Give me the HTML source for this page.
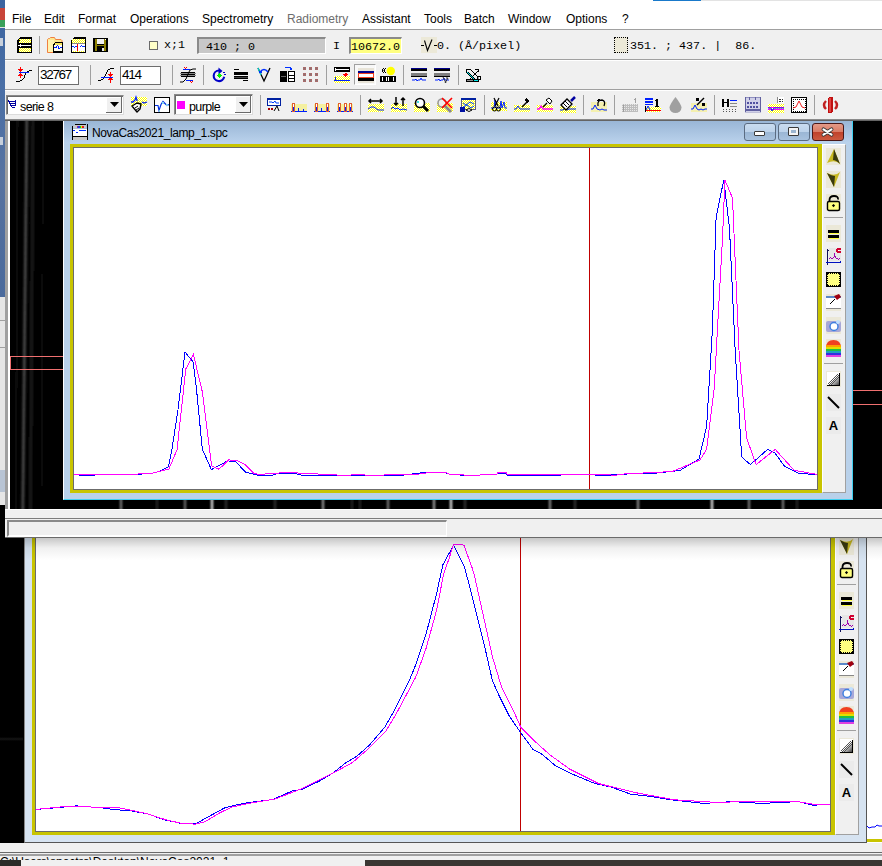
<!DOCTYPE html><html><head><meta charset="utf-8"><style>
*{margin:0;padding:0;box-sizing:border-box}
html,body{width:882px;height:866px;overflow:hidden;background:#000;position:relative;font-family:"Liberation Sans",sans-serif;font-size:12px;color:#000}
.a{position:absolute}
.mono{font-family:"Liberation Mono",monospace}
.menu span{position:absolute;top:12px;font-size:12px;line-height:14px;color:#000}
.vs{position:absolute;width:1px;background:#a0a0a0}
svg.i{position:absolute;overflow:visible}
.tb{border:1px solid #5b6c82;border-radius:3px;background:linear-gradient(#c9dcf0 0,#bcd2ea 50%,#9ab6d4 50%,#a8c2de 100%)}
.tb.cl{border-color:#4a1818;background:linear-gradient(#e39a88 0,#d97a64 50%,#c0412a 50%,#cc5a40 100%)}
.tb i.m{position:absolute;left:9px;top:7px;width:11px;height:5px;background:#fff;border:1px solid #3a3a3a;border-radius:1px}
.tb i.x{position:absolute;left:9px;top:3px;width:11px;height:9px;background:#9bb5d0;border:1px solid #3a3a3a;box-shadow:inset 0 0 0 2px #f4f4f4;border-radius:1px}
.inp{position:absolute;background:#fff;border:1px solid #6e6e6e;font-size:13.5px;line-height:15px;letter-spacing:-1.3px}
.sunk{position:absolute;border-top:2px solid #8a8a8a;border-left:2px solid #8a8a8a;border-bottom:1px solid #fff;border-right:1px solid #fff}
</style></head><body>
<svg width="0" height="0" style="position:absolute"><defs><pattern id="dy" width="2" height="2" patternUnits="userSpaceOnUse"><rect width="2" height="2" fill="#fff"/><rect width="1" height="1" fill="#ff0"/><rect x="1" y="1" width="1" height="1" fill="#ff0"/></pattern></defs></svg>
<div class="a" style="left:0;top:0;width:5px;height:540px;background:#000"></div>
<div class="a" style="left:0;top:0;width:5px;height:297px;background:linear-gradient(#3b64a0,#4a6fa6 30%,#5873a0 60%,#4a6a9c)"></div>
<div class="a" style="left:0;top:8px;width:5px;height:12px;background:#c8453a"></div>
<div class="a" style="left:0;top:20px;width:5px;height:7px;background:#3aa05a"></div>
<div class="a" style="left:0;top:27px;width:5px;height:1px;background:#e0e0e0"></div>
<div class="a" style="left:0;top:38px;width:3px;height:8px;background:#c8d0dc"></div>
<div class="a" style="left:0;top:137px;width:3px;height:8px;background:#c8d0dc"></div>
<div class="a" style="left:0;top:297px;width:5px;height:173px;background:#e6e6e6"></div>
<div class="a" style="left:0;top:320px;width:5px;height:1px;background:#a0a0a0"></div>
<div class="a" style="left:0;top:347px;width:5px;height:1px;background:#a0a0a0"></div>
<div class="a" style="left:0;top:470px;width:5px;height:22px;background:#b8c4d4"></div>
<div class="a" style="left:0;top:492px;width:5px;height:13px;background:#e6e6e6"></div>
<div class="a menu" style="left:5px;top:0;width:877px;height:29px;background:#fff">
 <span style="left:7px">File</span>
 <span style="left:39px">Edit</span>
 <span style="left:73px">Format</span>
 <span style="left:125px">Operations</span>
 <span style="left:197px">Spectrometry</span>
 <span style="left:282px;color:#6d6d6d">Radiometry</span>
 <span style="left:357px">Assistant</span>
 <span style="left:419px">Tools</span>
 <span style="left:459px">Batch</span>
 <span style="left:503px">Window</span>
 <span style="left:561px">Options</span>
 <span style="left:617px">?</span>
</div>
<div class="a" style="left:653px;top:0;width:48px;height:1px;background:#1979ca"></div>
<div class="a" style="left:701px;top:0;width:181px;height:1px;background:#e3e3e3"></div>
<div class="a" style="left:5px;top:29px;width:877px;height:92px;background:#f0f0f0"></div>
<div class="a" style="left:5px;top:29px;width:877px;height:1px;background:#a0a0a0"></div>
<div class="a" style="left:5px;top:59px;width:877px;height:1px;background:#a0a0a0"></div>
<div class="a" style="left:5px;top:60px;width:877px;height:1px;background:#fff"></div>
<div class="a" style="left:5px;top:89px;width:877px;height:1px;background:#a0a0a0"></div>
<div class="a" style="left:5px;top:90px;width:877px;height:1px;background:#fff"></div>
<div class="a" style="left:5px;top:119px;width:877px;height:1px;background:#8a8a8a"></div>
<div class="a" style="left:5px;top:120px;width:877px;height:1px;background:#646464"></div>
<svg class="i" style="left:17px;top:37px" width="16" height="16" viewBox="0 0 16 16" shape-rendering="crispEdges"><path d="M3 0h12v16H0V3z" fill="#000"/><rect x="2" y="2" width="12" height="4" fill="url(#dy)"/><rect x="2" y="3" width="1" height="1" fill="#000"/><rect x="1" y="8" width="13" height="1" fill="#fff"/><rect x="3" y="7" width="1" height="3" fill="#fff"/><rect x="2" y="11" width="12" height="4" fill="url(#dy)"/></svg>
<div class="vs" style="left:39px;top:36px;height:18px"></div>
<svg class="i" style="left:47px;top:37px" width="16" height="16" viewBox="0 0 16 16" shape-rendering="crispEdges"><path d="M0.5 15.5V2.5l1-1h1l1-1h4l1 2h5.5l1 1v12z" fill="#fde890" stroke="#f08040" shape-rendering="auto"/><rect x="1" y="3" width="6" height="12" fill="#fff4b0"/><path d="M8 5h8v11H6V7z" fill="#000"/><rect x="8" y="6" width="7" height="2" fill="#f8e860"/><rect x="7" y="8" width="8" height="6" fill="#fffff0"/><rect x="7" y="10" width="2" height="1" fill="#0020ff"/><rect x="9" y="9" width="1" height="2" fill="#0020ff"/><rect x="10" y="8" width="1" height="1" fill="#0020ff"/><rect x="11" y="9" width="1" height="3" fill="#0020ff"/><rect x="12" y="11" width="1" height="1" fill="#0020ff"/><rect x="13" y="10" width="2" height="1" fill="#0020ff"/></svg>
<svg class="i" style="left:71px;top:37px" width="16" height="16" viewBox="0 0 16 16" shape-rendering="crispEdges"><path d="M3 0h12v16H0V3z" fill="#000"/><rect x="1" y="2" width="13" height="4" fill="url(#dy)"/><rect x="1" y="6" width="13" height="1" fill="#888"/><rect x="1" y="7" width="13" height="7" fill="#fff"/><rect x="1" y="9" width="2" height="1" fill="#0030ff"/><rect x="3" y="10" width="1" height="1" fill="#0030ff"/><rect x="4" y="9" width="3" height="1" fill="#0030ff"/><rect x="9" y="9" width="1" height="1" fill="#0030ff"/><rect x="10" y="8" width="1" height="1" fill="#0030ff"/><rect x="11" y="9" width="1" height="1" fill="#0030ff"/><rect x="12" y="9" width="2" height="1" fill="#0030ff"/><rect x="6" y="7" width="1" height="7" fill="#ff0000"/><rect x="1" y="14" width="13" height="1" fill="url(#dy)"/></svg>
<svg class="i" style="left:93px;top:37px" width="16" height="16" viewBox="0 0 16 16" shape-rendering="crispEdges"><rect x="0" y="1" width="15" height="14" fill="#000"/><rect x="2" y="2" width="2" height="12" fill="#8c8000"/><rect x="11" y="2" width="2" height="12" fill="#8c8000"/><rect x="4" y="2" width="7" height="5" fill="#f0f0f0"/><rect x="4" y="7" width="7" height="1" fill="#000"/><rect x="4" y="8" width="7" height="1" fill="#8c8000"/><rect x="12" y="2" width="1" height="1" fill="#fff"/><rect x="9" y="11" width="2" height="3" fill="#e8e8e8"/></svg>
<div class="a" style="left:149px;top:41px;width:9px;height:9px;background:#ffffc8;border:1px solid #6a6a6a"></div>
<div class="a mono" style="left:164px;top:39px;font-size:11.7px;line-height:13px;color:#000">x;1</div>
<div class="sunk" style="left:197px;top:37px;width:129px;height:17px;background:#c8c8c8"></div>
<div class="a mono" style="left:206px;top:41px;font-size:11.7px;line-height:13px">410 ; 0</div>
<div class="a mono" style="left:333px;top:40px;font-size:11.7px;line-height:13px">I</div>
<div class="sunk" style="left:349px;top:37px;width:53px;height:17px;background:#ffff80"></div>
<div class="a mono" style="left:351px;top:41px;font-size:11.7px;line-height:13px">10672.0</div>
<svg class="i" style="left:421px;top:37px" width="16" height="16" viewBox="0 0 16 16" shape-rendering="crispEdges"><rect x="0" y="0" width="16" height="16" fill="#ece9d8"/><rect x="0" y="8" width="3" height="1" fill="#000"/><rect x="13" y="8" width="3" height="1" fill="#000"/><path d="M3.5 3.5l3 10 4.5-11" fill="none" stroke="#000" stroke-width="1.1" shape-rendering="auto"/></svg>
<div class="a mono" style="left:437px;top:40px;font-size:11.7px;line-height:13px">0. (&#197;/pixel)</div>
<div class="a" style="left:614px;top:37px;width:14px;height:16px;background:#ece9d8;border:1px dotted #000"></div>
<div class="a mono" style="left:630px;top:40px;font-size:11.7px;line-height:13px;white-space:pre">351. ; 437. |  86.</div>
<svg class="i" style="left:16px;top:67px" width="16" height="16" viewBox="0 0 16 16" shape-rendering="crispEdges"><rect x="0" y="14" width="4" height="1" fill="#000"/><rect x="4" y="13" width="2" height="1" fill="#000"/><rect x="6" y="12" width="1" height="1" fill="#000"/><rect x="7" y="11" width="1" height="1" fill="#000"/><rect x="8" y="8" width="1" height="3" fill="#000"/><rect x="9" y="6" width="1" height="2" fill="#000"/><rect x="10" y="5" width="1" height="1" fill="#000"/><rect x="11" y="4" width="2" height="1" fill="#000"/><rect x="13" y="3" width="3" height="1" fill="#000"/><rect x="3" y="5" width="10" height="1" fill="#0020ff"/><rect x="4" y="0" width="1" height="5" fill="#ff0000"/><rect x="2" y="2" width="5" height="1" fill="#ff0000"/><rect x="3" y="3" width="3" height="1" fill="#ff0000"/><rect x="4" y="6" width="1" height="5" fill="#ff0000"/><rect x="3" y="7" width="3" height="1" fill="#ff0000"/><rect x="2" y="8" width="5" height="1" fill="#ff0000"/></svg>
<div class="inp" style="left:38px;top:66px;width:41px;height:19px;padding:0 0 0 1px">32767</div>
<div class="vs" style="left:90px;top:65px;height:20px"></div>
<svg class="i" style="left:98px;top:67px" width="16" height="16" viewBox="0 0 16 16" shape-rendering="crispEdges"><rect x="0" y="13" width="3" height="1" fill="#000"/><rect x="3" y="12" width="2" height="1" fill="#000"/><rect x="5" y="11" width="1" height="1" fill="#000"/><rect x="6" y="9" width="1" height="2" fill="#000"/><rect x="7" y="7" width="1" height="2" fill="#000"/><rect x="8" y="5" width="1" height="2" fill="#000"/><rect x="9" y="3" width="1" height="2" fill="#000"/><rect x="10" y="2" width="2" height="1" fill="#000"/><rect x="12" y="1" width="4" height="1" fill="#000"/><rect x="3" y="10" width="12" height="1" fill="#0020ff"/><rect x="12" y="5" width="1" height="5" fill="#ff0000"/><rect x="10" y="7" width="5" height="1" fill="#ff0000"/><rect x="11" y="8" width="3" height="1" fill="#ff0000"/><rect x="12" y="11" width="1" height="5" fill="#ff0000"/><rect x="11" y="11" width="3" height="1" fill="#ff0000"/><rect x="10" y="12" width="5" height="1" fill="#ff0000"/></svg>
<div class="inp" style="left:120px;top:66px;width:41px;height:19px;padding:0 0 0 1px">414</div>
<div class="vs" style="left:172px;top:65px;height:20px"></div>
<svg class="i" style="left:180px;top:67px" width="16" height="16" viewBox="0 0 16 16" shape-rendering="crispEdges"><rect x="1" y="5" width="14" height="1" fill="#000"/><rect x="0" y="6" width="16" height="1" fill="#888"/><rect x="1" y="7" width="14" height="1" fill="#000"/><rect x="1" y="9" width="14" height="1" fill="#000"/><rect x="0" y="8" width="16" height="1" fill="#888"/><rect x="3" y="2" width="7" height="1" fill="#0020ff"/><rect x="6" y="13" width="7" height="1" fill="#0020ff"/><path d="M0 15h3l3-3 2-5 2-4 3-1h3" fill="none" stroke="#000" shape-rendering="auto"/><rect x="4" y="0" width="1" height="1" fill="#f00"/><rect x="6" y="0" width="1" height="1" fill="#f00"/><rect x="5" y="1" width="1" height="1" fill="#f00"/><rect x="10" y="14" width="1" height="1" fill="#f00"/><rect x="12" y="14" width="1" height="1" fill="#f00"/><rect x="11" y="15" width="1" height="1" fill="#f00"/></svg>
<div class="vs" style="left:203px;top:65px;height:20px"></div>
<svg class="i" style="left:211px;top:67px" width="16" height="16" viewBox="0 0 16 16" shape-rendering="crispEdges"><path d="M8 3.5A5.3 5.3 0 1 0 13.2 9.8" fill="none" stroke="#0000c8" stroke-width="2.1" shape-rendering="auto"/><path d="M7.5 0.5L11.5 4 7.5 7.5z" fill="#0000c8" shape-rendering="auto"/><rect x="12" y="5" width="2" height="1" fill="#0000c8"/><rect x="13" y="7" width="2" height="1" fill="#0000c8"/><rect x="7" y="7" width="3" height="3" fill="#00f000"/><rect x="8" y="6" width="1" height="5" fill="#00f000"/><rect x="6" y="8" width="5" height="1" fill="#00f000"/></svg>
<svg class="i" style="left:234px;top:67px" width="16" height="16" viewBox="0 0 16 16" shape-rendering="crispEdges"><rect x="0" y="2" width="5" height="1" fill="#000"/><rect x="0" y="5" width="14" height="3" fill="#000"/><rect x="0" y="9" width="14" height="3" fill="#000"/><rect x="0" y="10" width="14" height="1" fill="#444"/><rect x="9" y="13" width="5" height="1" fill="#000"/></svg>
<svg class="i" style="left:257px;top:67px" width="16" height="16" viewBox="0 0 16 16" shape-rendering="crispEdges"><path d="M1 1l6 13 6-13" fill="none" stroke="#000" stroke-width="1.3" shape-rendering="auto"/><path d="M1 1l3 7" stroke="#00d0d0" stroke-width="1.3" shape-rendering="auto"/><path d="M3 5q4-5 8 0" fill="none" stroke="#0030ff" stroke-width="1.5" shape-rendering="auto"/><rect x="2" y="4" width="3" height="2" fill="#0030ff"/></svg>
<svg class="i" style="left:280px;top:67px" width="16" height="16" viewBox="0 0 16 16" shape-rendering="crispEdges"><rect x="5" y="0" width="6" height="1" fill="#0030ff"/><rect x="10" y="1" width="2" height="2" fill="#0030ff"/><rect x="0" y="4" width="7" height="11" fill="#000"/><rect x="1" y="9" width="5" height="1" fill="#666"/><rect x="8" y="4" width="7" height="11" fill="#000"/><rect x="9" y="5" width="5" height="3" fill="#fff"/><rect x="9" y="9" width="5" height="2" fill="#fff"/><rect x="9" y="12" width="5" height="2" fill="#fff"/></svg>
<svg class="i" style="left:303px;top:67px" width="16" height="16" viewBox="0 0 16 16" shape-rendering="crispEdges"><rect x="0" y="0" width="3" height="3" fill="#a86a6a"/><rect x="1" y="1" width="1" height="1" fill="#7a7a7a"/><rect x="0" y="6" width="3" height="3" fill="#a86a6a"/><rect x="1" y="7" width="1" height="1" fill="#7a7a7a"/><rect x="0" y="12" width="3" height="3" fill="#a86a6a"/><rect x="1" y="13" width="1" height="1" fill="#7a7a7a"/><rect x="6" y="0" width="3" height="3" fill="#a86a6a"/><rect x="7" y="1" width="1" height="1" fill="#7a7a7a"/><rect x="6" y="6" width="3" height="3" fill="#a86a6a"/><rect x="7" y="7" width="1" height="1" fill="#7a7a7a"/><rect x="6" y="12" width="3" height="3" fill="#a86a6a"/><rect x="7" y="13" width="1" height="1" fill="#7a7a7a"/><rect x="12" y="0" width="3" height="3" fill="#a86a6a"/><rect x="13" y="1" width="1" height="1" fill="#7a7a7a"/><rect x="12" y="6" width="3" height="3" fill="#a86a6a"/><rect x="13" y="7" width="1" height="1" fill="#7a7a7a"/><rect x="12" y="12" width="3" height="3" fill="#a86a6a"/><rect x="13" y="13" width="1" height="1" fill="#7a7a7a"/></svg>
<div class="vs" style="left:326px;top:65px;height:20px"></div>
<svg class="i" style="left:334px;top:67px" width="16" height="16" viewBox="0 0 16 16" shape-rendering="crispEdges"><rect x="0" y="0" width="16" height="5" fill="#000"/><rect x="1" y="2" width="14" height="1" fill="#fff"/><rect x="1" y="1" width="1" height="3" fill="#fff"/><rect x="0" y="9" width="16" height="7" fill="url(#dy)"/><rect x="0" y="13" width="16" height="1" fill="#0020ff"/><rect x="1" y="10" width="1" height="4" fill="#0020ff"/><path d="M9 7h5l-2.5 3z" fill="#f00"/><rect x="11" y="6" width="2" height="2" fill="#f00"/></svg>
<div class="a" style="left:354px;top:64px;width:22px;height:21px;background:#f8f8f8;border-left:1px solid #a0a0a0;border-top:1px solid #a0a0a0;border-right:1px solid #fff;border-bottom:1px solid #fff"></div>
<svg class="i" style="left:358px;top:67px" width="16" height="16" viewBox="0 0 16 16" shape-rendering="crispEdges"><rect x="0" y="1" width="16" height="3" fill="#e8e4d8"/><rect x="0" y="4" width="16" height="2" fill="#00008a"/><rect x="0" y="6" width="16" height="5" fill="#f04020"/><rect x="1" y="7" width="14" height="3" fill="#fff"/><rect x="0" y="11" width="16" height="3" fill="#000"/><rect x="0" y="14" width="16" height="2" fill="#e8e4d8"/></svg>
<svg class="i" style="left:380px;top:67px" width="17" height="16" viewBox="0 0 17 16" shape-rendering="crispEdges"><rect x="2" y="2" width="1" height="3" fill="#000"/><rect x="3" y="1" width="1" height="1" fill="#000"/><rect x="3" y="5" width="1" height="1" fill="#000"/><rect x="3" y="3" width="1" height="1" fill="#888"/><rect x="4" y="2" width="1" height="3" fill="#000"/><rect x="5" y="1" width="1" height="1" fill="#000"/><rect x="5" y="5" width="1" height="1" fill="#000"/><circle cx="10.8" cy="4" r="4.2" fill="#ffff00" shape-rendering="auto"/><rect x="0" y="9" width="16" height="6" fill="#000"/><rect x="2" y="10" width="1" height="4" fill="#fff"/><rect x="6" y="10" width="1" height="4" fill="#fff"/><rect x="8" y="10" width="1" height="4" fill="#fff"/><rect x="13" y="10" width="1" height="4" fill="#fff"/></svg>
<div class="vs" style="left:403px;top:65px;height:20px"></div>
<svg class="i" style="left:411px;top:67px" width="16" height="16" viewBox="0 0 16 16" shape-rendering="crispEdges"><rect x="0" y="1" width="16" height="3" fill="#000"/><rect x="0" y="1" width="16" height="1" fill="#00008a"/><rect x="0" y="6" width="16" height="3" fill="#808080"/><rect x="0" y="9" width="16" height="1" fill="#000"/><path d="M1 13h3l1-1 1 2 1-1h2l1-2 1 2h4" fill="none" stroke="#0020ff" shape-rendering="auto"/></svg>
<svg class="i" style="left:434px;top:67px" width="16" height="16" viewBox="0 0 16 16" shape-rendering="crispEdges"><rect x="0" y="1" width="16" height="3" fill="#000"/><rect x="0" y="1" width="16" height="1" fill="#00008a"/><rect x="0" y="6" width="16" height="3" fill="#808080"/><rect x="0" y="9" width="16" height="1" fill="#000"/><path d="M1 13h3l1-1 1 2 1-1h2l1-2 1 2h4" fill="none" stroke="#0020ff" shape-rendering="auto"/><path d="M9 10l3 6M12 11h2l-3 5" fill="none" stroke="#333" shape-rendering="auto"/></svg>
<div class="vs" style="left:458px;top:65px;height:20px"></div>
<svg class="i" style="left:465px;top:67px" width="16" height="16" viewBox="0 0 16 16" shape-rendering="crispEdges"><rect x="1" y="2" width="4" height="1" fill="#000"/><rect x="1" y="3" width="1" height="2" fill="#000"/><rect x="10" y="2" width="4" height="1" fill="#000"/><rect x="13" y="3" width="1" height="2" fill="#000"/><rect x="5" y="2" width="1" height="1" fill="#000"/><rect x="6" y="3" width="1" height="1" fill="#000"/><rect x="7" y="4" width="1" height="1" fill="#000"/><rect x="8" y="5" width="1" height="1" fill="#000"/><rect x="9" y="6" width="1" height="1" fill="#000"/><rect x="10" y="7" width="1" height="1" fill="#000"/><rect x="11" y="8" width="1" height="1" fill="#000"/><rect x="12" y="9" width="1" height="1" fill="#000"/><rect x="12" y="4" width="1" height="1" fill="#000"/><rect x="11" y="5" width="1" height="1" fill="#000"/><rect x="10" y="6" width="1" height="1" fill="#000"/><rect x="9" y="7" width="1" height="1" fill="#000"/><rect x="8" y="8" width="1" height="1" fill="#000"/><rect x="7" y="9" width="1" height="1" fill="#000"/><rect x="6" y="10" width="1" height="1" fill="#000"/><rect x="5" y="11" width="1" height="1" fill="#000"/><rect x="4" y="12" width="1" height="1" fill="#000"/><rect x="1" y="5" width="1" height="1" fill="#000"/><rect x="2" y="5" width="1" height="1" fill="#00e8e8"/><rect x="3" y="5" width="1" height="1" fill="#000"/><rect x="2" y="6" width="1" height="1" fill="#000"/><rect x="3" y="6" width="1" height="1" fill="#00e8e8"/><rect x="4" y="6" width="1" height="1" fill="#000"/><rect x="3" y="7" width="1" height="1" fill="#000"/><rect x="4" y="7" width="1" height="1" fill="#00e8e8"/><rect x="5" y="7" width="1" height="1" fill="#000"/><rect x="4" y="8" width="1" height="1" fill="#000"/><rect x="5" y="8" width="1" height="1" fill="#00e8e8"/><rect x="6" y="8" width="1" height="1" fill="#000"/><rect x="5" y="9" width="1" height="1" fill="#000"/><rect x="6" y="9" width="1" height="1" fill="#00e8e8"/><rect x="7" y="9" width="1" height="1" fill="#000"/><rect x="6" y="10" width="1" height="1" fill="#000"/><rect x="7" y="10" width="1" height="1" fill="#00e8e8"/><rect x="8" y="10" width="1" height="1" fill="#000"/><rect x="7" y="11" width="1" height="1" fill="#000"/><rect x="8" y="11" width="1" height="1" fill="#00e8e8"/><rect x="9" y="11" width="1" height="1" fill="#000"/><rect x="1" y="12" width="13" height="3" fill="#000"/><rect x="2" y="13" width="6" height="1" fill="#909090"/><rect x="9" y="13" width="4" height="1" fill="#00e8e8"/><rect x="12" y="9" width="4" height="4" fill="#000"/><rect x="13" y="10" width="1" height="2" fill="#a0a0a0"/><rect x="14" y="10" width="1" height="2" fill="#fff"/></svg>
<div class="a" style="left:6px;top:95px;width:118px;height:20px;background:#fff;border:1px solid #8a8a8a;border-right-color:#dcdcdc;border-bottom-color:#dcdcdc;box-shadow:inset 1px 1px 0 #6a6a6a"></div>
<div class="a" style="left:106px;top:97px;width:16px;height:16px;background:#f0f0f0;border-right:1px solid #6a6a6a;border-bottom:1px solid #6a6a6a;box-shadow:inset 1px 1px 0 #fff"></div>
<svg class="i" style="left:110px;top:102px" width="9" height="5"><path d="M0 0h9L4.5 5z" fill="#000"/></svg>
<svg class="i" style="left:8px;top:100px" width="9" height="9" viewBox="0 0 9 9" shape-rendering="crispEdges"><rect x="0" y="0" width="1" height="1" fill="#0000a0"/><rect x="0" y="1" width="8" height="1" fill="#0000a0"/><rect x="1" y="2" width="1" height="1" fill="#0000a0"/><rect x="1" y="3" width="7" height="1" fill="#0000a0"/><rect x="2" y="4" width="1" height="1" fill="#0000a0"/><rect x="2" y="5" width="6" height="1" fill="#0000a0"/><rect x="3" y="6" width="1" height="1" fill="#0000a0"/><rect x="4" y="7" width="3" height="1" fill="#0000a0"/><rect x="7" y="0" width="1" height="2" fill="#0000a0"/><rect x="7" y="2" width="1" height="2" fill="#0000a0"/><rect x="7" y="4" width="1" height="2" fill="#0000a0"/></svg>
<div class="a" style="left:20px;top:100px;font-size:12.5px;line-height:14px;letter-spacing:-0.6px">serie 8</div>
<svg class="i" style="left:131px;top:97px" width="16" height="16" viewBox="0 0 16 16" shape-rendering="crispEdges"><rect x="0" y="0" width="16" height="9" fill="url(#dy)"/><path d="M0 5h2l2-2 1-3 1 3 0 1M11 5l2 1 3-1" fill="none" stroke="#0020ff" stroke-width="1.3" shape-rendering="auto"/><path d="M1 9l5-3 4 1-1 5-3 3z" fill="#fff" stroke="#000" stroke-width="1.4" stroke-linejoin="round" shape-rendering="auto"/><path d="M4 11l3-2M5 13l3-2" stroke="#000" stroke-width="1" shape-rendering="auto"/></svg>
<svg class="i" style="left:154px;top:97px" width="16" height="16" viewBox="0 0 16 16" shape-rendering="crispEdges"><rect x="0" y="0" width="16" height="16" fill="#000"/><rect x="1" y="1" width="14" height="14" fill="#fff"/><path d="M1 8.5h3l1 5 2-6 2-3 2 2 2 2 2-1" fill="none" stroke="#0030e0" stroke-width="1.2" shape-rendering="auto"/><rect x="8" y="5" width="2" height="2" fill="#80d0f0"/><rect x="12" y="7" width="2" height="2" fill="#80d0f0"/><rect x="5" y="13" width="1" height="2" fill="#80d0f0"/></svg>
<div class="a" style="left:174px;top:94px;width:79px;height:21px;background:#fff;border:1px solid #8a8a8a;border-right-color:#dcdcdc;border-bottom-color:#dcdcdc;box-shadow:inset 1px 1px 0 #6a6a6a"></div>
<div class="a" style="left:177px;top:101px;width:8px;height:8px;background:#ff00ff"></div>
<div class="a" style="left:189px;top:100px;font-size:12.5px;line-height:14px;letter-spacing:-0.6px">purple</div>
<div class="a" style="left:235px;top:96px;width:16px;height:17px;background:#f0f0f0;border-right:1px solid #6a6a6a;border-bottom:1px solid #6a6a6a;box-shadow:inset 1px 1px 0 #fff"></div>
<svg class="i" style="left:239px;top:102px" width="9" height="5"><path d="M0 0h9L4.5 5z" fill="#000"/></svg>
<div class="vs" style="left:260px;top:95px;height:20px"></div>
<svg class="i" style="left:267px;top:98px" width="14" height="14" viewBox="0 0 14 14" shape-rendering="crispEdges"><rect x="0" y="0" width="14" height="8" fill="#0020a0"/><rect x="1" y="1" width="12" height="6" fill="#fff"/><rect x="1" y="1" width="12" height="1" fill="#0020a0"/><path d="M2 4h3l1 1 2-2 1 2h3" fill="none" stroke="#0040ff" shape-rendering="auto"/><rect x="1" y="10" width="2" height="2" fill="#a00"/><rect x="4" y="10" width="2" height="2" fill="#a00"/><path d="M7 13l3-5 2 5" fill="none" stroke="#000" shape-rendering="auto"/></svg>
<svg class="i" style="left:291px;top:99px" width="16" height="16" viewBox="0 0 16 16" shape-rendering="crispEdges"><rect x="0" y="5" width="16" height="7" fill="#f4f0a0"/><rect x="0" y="12" width="16" height="1" fill="#0020ff"/><rect x="1" y="4" width="3" height="9" fill="#e06030"/><rect x="2" y="5" width="1" height="7" fill="#fff"/><rect x="2" y="8" width="1" height="4" fill="#0020ff"/><rect x="7" y="9" width="1" height="3" fill="#0020ff"/><rect x="12" y="10" width="1" height="2" fill="#0020ff"/></svg>
<svg class="i" style="left:314px;top:99px" width="16" height="16" viewBox="0 0 16 16" shape-rendering="crispEdges"><rect x="0" y="5" width="16" height="7" fill="#f4f0a0"/><rect x="0" y="12" width="16" height="1" fill="#0020ff"/><rect x="1" y="4" width="3" height="9" fill="#e06030"/><rect x="2" y="5" width="1" height="7" fill="#fff"/><rect x="2" y="8" width="1" height="4" fill="#0020ff"/><rect x="12" y="4" width="3" height="9" fill="#e06030"/><rect x="13" y="5" width="1" height="7" fill="#fff"/><rect x="13" y="8" width="1" height="4" fill="#0020ff"/><rect x="7" y="9" width="1" height="3" fill="#0020ff"/></svg>
<svg class="i" style="left:337px;top:99px" width="16" height="16" viewBox="0 0 16 16" shape-rendering="crispEdges"><rect x="0" y="5" width="16" height="7" fill="#f4f0a0"/><rect x="0" y="12" width="16" height="1" fill="#0020ff"/><rect x="1" y="4" width="3" height="9" fill="#e06030"/><rect x="2" y="5" width="1" height="7" fill="#fff"/><rect x="2" y="8" width="1" height="4" fill="#0020ff"/><rect x="7" y="4" width="3" height="9" fill="#e06030"/><rect x="8" y="5" width="1" height="7" fill="#fff"/><rect x="8" y="8" width="1" height="4" fill="#0020ff"/><rect x="12" y="4" width="3" height="9" fill="#e06030"/><rect x="13" y="5" width="1" height="7" fill="#fff"/><rect x="13" y="8" width="1" height="4" fill="#0020ff"/></svg>
<div class="vs" style="left:360px;top:95px;height:20px"></div>
<svg class="i" style="left:368px;top:97px" width="16" height="16" viewBox="0 0 16 16" shape-rendering="crispEdges"><rect x="0" y="7" width="16" height="8" fill="url(#dy)"/><path d="M0 12l3-2h3l4 3h6" fill="none" stroke="#0020ff" shape-rendering="auto"/><path d="M1 4h13M3 2l-2 2 2 2M12 2l2 2-2 2" fill="none" stroke="#000" stroke-width="1.5" shape-rendering="auto"/></svg>
<svg class="i" style="left:391px;top:97px" width="16" height="16" viewBox="0 0 16 16" shape-rendering="crispEdges"><rect x="0" y="7" width="16" height="8" fill="url(#dy)"/><path d="M0 12l2-2 2 2 3-1 2 2 3-1 4 1" fill="none" stroke="#0020ff" shape-rendering="auto"/><path d="M5 0v8M3 6l2 2 2-2M12 9V1M10 3l2-2 2 2" fill="none" stroke="#000" stroke-width="1.5" shape-rendering="auto"/></svg>
<svg class="i" style="left:414px;top:97px" width="16" height="16" viewBox="0 0 16 16" shape-rendering="crispEdges"><rect x="0" y="6" width="16" height="9" fill="url(#dy)"/><circle cx="6" cy="6" r="4.5" fill="#fff" stroke="#000" stroke-width="1.6" shape-rendering="auto"/><path d="M9 9l5 5" stroke="#000" stroke-width="3" shape-rendering="auto"/><rect x="3" y="4" width="2" height="2" fill="#40e0e0"/></svg>
<svg class="i" style="left:437px;top:97px" width="16" height="16" viewBox="0 0 16 16" shape-rendering="crispEdges"><rect x="0" y="6" width="16" height="9" fill="url(#dy)"/><circle cx="5" cy="6" r="4" fill="#eee" stroke="#999" stroke-width="1.6" shape-rendering="auto"/><path d="M8 9l6 6" stroke="#888" stroke-width="3" shape-rendering="auto"/><path d="M5 1l10 10M15 1L5 11" stroke="#f00" stroke-width="1.6" shape-rendering="auto"/></svg>
<svg class="i" style="left:460px;top:97px" width="16" height="16" viewBox="0 0 16 16" shape-rendering="crispEdges"><rect x="1" y="1" width="15" height="12" fill="#606080"/><rect x="2" y="3" width="13" height="9" fill="#fff"/><rect x="2" y="3" width="13" height="9" fill="url(#dy)"/><rect x="1" y="1" width="15" height="2" fill="#0020a0"/><path d="M3 6l3 2 4-3 4 2M3 10l4-2 4 3 3-2" fill="none" stroke="#0040ff" shape-rendering="auto"/><rect x="0" y="10" width="5" height="5" fill="#0010a0"/><path d="M6 13q3-3 6 0q-3 3-6 0z" fill="#fff" stroke="#000" shape-rendering="auto"/></svg>
<div class="vs" style="left:484px;top:95px;height:20px"></div>
<svg class="i" style="left:491px;top:97px" width="16" height="16" viewBox="0 0 16 16" shape-rendering="crispEdges"><rect x="0" y="5" width="16" height="9" fill="url(#dy)"/><path d="M0 11h3l1-8 1 8h4l1-7 1 7 2-6 1 6h2" fill="none" stroke="#0020ff" shape-rendering="auto"/><path d="M3 1l4 8M8 1L4 9" stroke="#000" stroke-width="1.2" shape-rendering="auto"/><circle cx="3.5" cy="12" r="2" fill="none" stroke="#000" shape-rendering="auto"/><circle cx="7.5" cy="12" r="2" fill="none" stroke="#000" shape-rendering="auto"/></svg>
<svg class="i" style="left:514px;top:97px" width="16" height="16" viewBox="0 0 16 16" shape-rendering="crispEdges"><rect x="0" y="8" width="16" height="7" fill="url(#dy)"/><path d="M0 12h2l2-3 2 3h10" fill="none" stroke="#0020ff" shape-rendering="auto"/><path d="M8 10l6-6" stroke="#000" stroke-width="1.5" shape-rendering="auto"/><path d="M12 1l3 3-2 2-3-3z" fill="#000"/></svg>
<svg class="i" style="left:537px;top:97px" width="16" height="16" viewBox="0 0 16 16" shape-rendering="crispEdges"><rect x="0" y="8" width="16" height="7" fill="url(#dy)"/><path d="M0 12h2l2-3 2 3h10" fill="none" stroke="#ff00ff" stroke-width="1.3" shape-rendering="auto"/><path d="M6 10l4-4" stroke="#000" stroke-width="1.2" shape-rendering="auto"/><path d="M9 3l3-2 3 3-2 3z" fill="#fff" stroke="#000" shape-rendering="auto"/></svg>
<svg class="i" style="left:560px;top:97px" width="16" height="16" viewBox="0 0 16 16" shape-rendering="crispEdges"><rect x="0" y="9" width="16" height="7" fill="url(#dy)"/><path d="M0 13h3l2-2 2 2 2-1h7" fill="none" stroke="#0020ff" shape-rendering="auto"/><path d="M1 8l6-6 5 5-6 6z" fill="#fff" stroke="#000" stroke-width="1.3" shape-rendering="auto"/><path d="M3 6l4 4M5 4l4 4" stroke="#000" shape-rendering="auto"/><path d="M11 4l4-4" stroke="#0000a0" stroke-width="2.5" shape-rendering="auto"/></svg>
<div class="vs" style="left:583px;top:95px;height:20px"></div>
<svg class="i" style="left:591px;top:97px" width="16" height="16" viewBox="0 0 16 16" shape-rendering="crispEdges"><rect x="0" y="5" width="16" height="10" fill="#f4f0b0"/><path d="M0 12h2l2-4 2 4 3 1 2-1 2 1h3" fill="none" stroke="#0020ff" shape-rendering="auto"/><path d="M7 9q-1-6 4-6 4 1 2 6" fill="none" stroke="#000" stroke-width="1.3" shape-rendering="auto"/><path d="M5 3l3 2 1-3z" fill="#000"/></svg>
<div class="vs" style="left:614px;top:95px;height:20px"></div>
<svg class="i" style="left:622px;top:97px" width="16" height="16" viewBox="0 0 16 16" shape-rendering="crispEdges"><rect x="0" y="7" width="16" height="8" fill="#bdbdbd"/><rect x="0" y="7" width="1" height="1" fill="#e8e8e8"/><rect x="0" y="9" width="1" height="1" fill="#e8e8e8"/><rect x="0" y="11" width="1" height="1" fill="#e8e8e8"/><rect x="0" y="13" width="1" height="1" fill="#e8e8e8"/><rect x="2" y="7" width="1" height="1" fill="#e8e8e8"/><rect x="2" y="9" width="1" height="1" fill="#e8e8e8"/><rect x="2" y="11" width="1" height="1" fill="#e8e8e8"/><rect x="2" y="13" width="1" height="1" fill="#e8e8e8"/><rect x="4" y="7" width="1" height="1" fill="#e8e8e8"/><rect x="4" y="9" width="1" height="1" fill="#e8e8e8"/><rect x="4" y="11" width="1" height="1" fill="#e8e8e8"/><rect x="4" y="13" width="1" height="1" fill="#e8e8e8"/><rect x="6" y="7" width="1" height="1" fill="#e8e8e8"/><rect x="6" y="9" width="1" height="1" fill="#e8e8e8"/><rect x="6" y="11" width="1" height="1" fill="#e8e8e8"/><rect x="6" y="13" width="1" height="1" fill="#e8e8e8"/><rect x="8" y="7" width="1" height="1" fill="#e8e8e8"/><rect x="8" y="9" width="1" height="1" fill="#e8e8e8"/><rect x="8" y="11" width="1" height="1" fill="#e8e8e8"/><rect x="8" y="13" width="1" height="1" fill="#e8e8e8"/><rect x="10" y="7" width="1" height="1" fill="#e8e8e8"/><rect x="10" y="9" width="1" height="1" fill="#e8e8e8"/><rect x="10" y="11" width="1" height="1" fill="#e8e8e8"/><rect x="10" y="13" width="1" height="1" fill="#e8e8e8"/><rect x="12" y="7" width="1" height="1" fill="#e8e8e8"/><rect x="12" y="9" width="1" height="1" fill="#e8e8e8"/><rect x="12" y="11" width="1" height="1" fill="#e8e8e8"/><rect x="12" y="13" width="1" height="1" fill="#e8e8e8"/><rect x="14" y="7" width="1" height="1" fill="#e8e8e8"/><rect x="14" y="9" width="1" height="1" fill="#e8e8e8"/><rect x="14" y="11" width="1" height="1" fill="#e8e8e8"/><rect x="14" y="13" width="1" height="1" fill="#e8e8e8"/><rect x="13" y="1" width="1" height="5" fill="#a0a0a0"/><rect x="12" y="2" width="1" height="1" fill="#a0a0a0"/><rect x="1" y="8" width="1" height="7" fill="#a0a0a0"/></svg>
<svg class="i" style="left:645px;top:97px" width="16" height="16" viewBox="0 0 16 16" shape-rendering="crispEdges"><rect x="0" y="1" width="8" height="2" fill="#0020ff"/><rect x="0" y="4" width="8" height="2" fill="#0020ff"/><rect x="0" y="7" width="8" height="1" fill="#0020ff"/><rect x="11" y="2" width="2" height="8" fill="#000"/><rect x="10" y="3" width="1" height="1" fill="#000"/><rect x="10" y="9" width="4" height="1" fill="#000"/><rect x="0" y="10" width="16" height="5" fill="url(#dy)"/><rect x="0" y="13" width="16" height="1" fill="#f00"/><path d="M1 13l2-4 2 4" fill="none" stroke="#0020ff" shape-rendering="auto"/><rect x="0" y="9" width="1" height="6" fill="#000"/></svg>
<svg class="i" style="left:668px;top:96px" width="15" height="18" viewBox="0 0 15 18" shape-rendering="crispEdges"><path d="M7.5 1Q2 8 1.5 11.5A6 5.5 0 0 0 13.5 11.5Q13 8 7.5 1z" fill="#a0a0a0" shape-rendering="auto"/></svg>
<svg class="i" style="left:691px;top:97px" width="16" height="16" viewBox="0 0 16 16" shape-rendering="crispEdges"><rect x="0" y="6" width="16" height="9" fill="#f4f0b0"/><path d="M0 12h2l2-4 2 4 2 1 2-1 2 1 2-1h2" fill="none" stroke="#0020ff" shape-rendering="auto"/><path d="M6 8l7-7" stroke="#000" stroke-width="1.5" shape-rendering="auto"/><rect x="5" y="1" width="3" height="3" fill="#000"/><rect x="11" y="6" width="3" height="3" fill="#000"/></svg>
<div class="vs" style="left:714px;top:95px;height:20px"></div>
<svg class="i" style="left:722px;top:97px" width="16" height="16" viewBox="0 0 16 16" shape-rendering="crispEdges"><rect x="0" y="2" width="2" height="8" fill="#000"/><rect x="5" y="2" width="2" height="8" fill="#000"/><rect x="0" y="5" width="7" height="1" fill="#000"/><rect x="8" y="3" width="7" height="1" fill="#0020ff"/><rect x="8" y="6" width="7" height="1" fill="#888"/><rect x="8" y="9" width="7" height="1" fill="#888"/><rect x="1" y="12" width="1" height="1" fill="#555"/><rect x="1" y="14" width="1" height="1" fill="#555"/><rect x="4" y="12" width="1" height="1" fill="#555"/><rect x="4" y="14" width="1" height="1" fill="#555"/><rect x="7" y="12" width="1" height="1" fill="#555"/><rect x="7" y="14" width="1" height="1" fill="#555"/><rect x="10" y="12" width="1" height="1" fill="#555"/><rect x="10" y="14" width="1" height="1" fill="#555"/><rect x="13" y="12" width="1" height="1" fill="#555"/><rect x="13" y="14" width="1" height="1" fill="#555"/></svg>
<svg class="i" style="left:745px;top:97px" width="16" height="16" viewBox="0 0 16 16" shape-rendering="crispEdges"><rect x="0" y="0" width="16" height="16" fill="#d0d0e8"/><rect x="0" y="0" width="16" height="1" fill="#9090c0"/><rect x="0" y="0" width="1" height="16" fill="#6060a0"/><rect x="15" y="0" width="1" height="16" fill="#6060a0"/><rect x="0" y="12" width="16" height="2" fill="#6060a0"/><rect x="4" y="0" width="1" height="3" fill="#6060a0"/><rect x="10" y="0" width="1" height="3" fill="#6060a0"/><rect x="2" y="5" width="2" height="2" fill="#5050a0"/><rect x="2" y="9" width="2" height="2" fill="#5050a0"/><rect x="5" y="5" width="2" height="2" fill="#5050a0"/><rect x="5" y="9" width="2" height="2" fill="#5050a0"/><rect x="8" y="5" width="2" height="2" fill="#5050a0"/><rect x="8" y="9" width="2" height="2" fill="#5050a0"/><rect x="11" y="5" width="2" height="2" fill="#5050a0"/><rect x="11" y="9" width="2" height="2" fill="#5050a0"/><rect x="0" y="15" width="16" height="1" fill="#c0c0d8"/></svg>
<svg class="i" style="left:768px;top:97px" width="16" height="16" viewBox="0 0 16 16" shape-rendering="crispEdges"><rect x="0" y="7" width="16" height="9" fill="url(#dy)"/><rect x="9" y="0" width="7" height="6" fill="#fff"/><rect x="9" y="0" width="1" height="6" fill="#888"/><rect x="11" y="2" width="2" height="1" fill="#333"/><rect x="14" y="2" width="1" height="1" fill="#333"/><rect x="11" y="4" width="2" height="1" fill="#333"/><rect x="14" y="4" width="1" height="1" fill="#333"/><rect x="0" y="10" width="16" height="1" fill="#ff00ff"/><rect x="0" y="12" width="16" height="1" fill="#ff00ff"/><path d="M0 11h3l1 3 2-3h10" fill="none" stroke="#0020ff" shape-rendering="auto"/></svg>
<svg class="i" style="left:791px;top:97px" width="16" height="16" viewBox="0 0 16 16" shape-rendering="crispEdges"><rect x="0" y="0" width="16" height="16" fill="#000"/><rect x="1" y="1" width="14" height="14" fill="#fff"/><rect x="2" y="2" width="1" height="1" fill="#000"/><rect x="2" y="14" width="1" height="1" fill="#000"/><rect x="4" y="2" width="1" height="1" fill="#000"/><rect x="4" y="14" width="1" height="1" fill="#000"/><rect x="6" y="2" width="1" height="1" fill="#000"/><rect x="6" y="14" width="1" height="1" fill="#000"/><rect x="8" y="2" width="1" height="1" fill="#000"/><rect x="8" y="14" width="1" height="1" fill="#000"/><rect x="10" y="2" width="1" height="1" fill="#000"/><rect x="10" y="14" width="1" height="1" fill="#000"/><rect x="12" y="2" width="1" height="1" fill="#000"/><rect x="12" y="14" width="1" height="1" fill="#000"/><rect x="14" y="2" width="1" height="1" fill="#000"/><rect x="14" y="14" width="1" height="1" fill="#000"/><rect x="2" y="2" width="1" height="1" fill="#000"/><rect x="14" y="2" width="1" height="1" fill="#000"/><rect x="2" y="4" width="1" height="1" fill="#000"/><rect x="14" y="4" width="1" height="1" fill="#000"/><rect x="2" y="6" width="1" height="1" fill="#000"/><rect x="14" y="6" width="1" height="1" fill="#000"/><rect x="2" y="8" width="1" height="1" fill="#000"/><rect x="14" y="8" width="1" height="1" fill="#000"/><rect x="2" y="10" width="1" height="1" fill="#000"/><rect x="14" y="10" width="1" height="1" fill="#000"/><rect x="2" y="12" width="1" height="1" fill="#000"/><rect x="14" y="12" width="1" height="1" fill="#000"/><rect x="2" y="14" width="1" height="1" fill="#000"/><rect x="14" y="14" width="1" height="1" fill="#000"/><path d="M2 11l3-1 3-6 3 6 3 1" fill="none" stroke="#f02020" shape-rendering="auto"/></svg>
<div class="vs" style="left:814px;top:95px;height:20px"></div>
<svg class="i" style="left:822px;top:97px" width="16" height="16" viewBox="0 0 16 16" shape-rendering="crispEdges"><rect x="6" y="0" width="5" height="16" rx="2" fill="#c01010"/><rect x="7" y="1" width="2" height="14" fill="#e04040"/><path d="M4 4q-4 4 0 8" fill="none" stroke="#c02020" stroke-width="2.4" shape-rendering="auto"/><path d="M13 4q4 4 0 8" fill="none" stroke="#c02020" stroke-width="2.4" shape-rendering="auto"/></svg>
<div class="a" style="left:5px;top:121px;width:3px;height:388px;background:#a0a0a0"></div>
<div class="a" style="left:8px;top:121px;width:2px;height:388px;background:#fff"></div>
<div class="a" style="left:10px;top:121px;width:872px;height:388px;background:#000"></div>
<svg class="a" style="left:63px;top:500px" width="790" height="9" viewBox="63 500 790 9"><defs><filter id="bl2" x="-50%" y="0" width="200%" height="100%"><feGaussianBlur stdDeviation="0.8 0"/></filter></defs><g filter="url(#bl2)"><rect x="120" y="500" width="2" height="9" fill="#8a8a8a"/><rect x="156" y="500" width="2" height="9" fill="#2a2a2a"/><rect x="184" y="500" width="2" height="9" fill="#7a7a7a"/><rect x="211" y="500" width="2" height="9" fill="#ffffff"/><rect x="225" y="500" width="2" height="9" fill="#333"/><rect x="274" y="500" width="2" height="9" fill="#333"/><rect x="322" y="500" width="2" height="9" fill="#a8a8a8"/><rect x="351" y="500" width="2" height="9" fill="#2a2a2a"/><rect x="359" y="500" width="2" height="9" fill="#2a2a2a"/><rect x="387" y="500" width="2" height="9" fill="#888"/><rect x="433" y="500" width="2" height="9" fill="#b0b0b0"/><rect x="450" y="500" width="2" height="9" fill="#ffffff"/><rect x="464" y="500" width="2" height="9" fill="#3a3a3a"/><rect x="549" y="500" width="2" height="9" fill="#999"/><rect x="574" y="500" width="2" height="9" fill="#3a3a3a"/><rect x="637" y="500" width="2" height="9" fill="#999"/><rect x="711" y="500" width="2" height="9" fill="#ffffff"/><rect x="748" y="500" width="2" height="9" fill="#888"/><rect x="782" y="500" width="2" height="9" fill="#888"/><rect x="796" y="500" width="2" height="9" fill="#2a2a2a"/></g></svg>
<svg class="a" style="left:10px;top:121px" width="53" height="388" viewBox="10 121 53 388"><defs><filter id="bl" x="-50%" y="0" width="200%" height="100%"><feGaussianBlur stdDeviation="0.9 0"/></filter></defs><g filter="url(#bl)"><path d="M26.8 121L22.8 509" stroke="#4e4e4e" stroke-width="2.6"/><path d="M33 121L30.5 509" stroke="#1c1c1c" stroke-width="3"/><path d="M17.5 121L16 509" stroke="#0e0e0e" stroke-width="2"/><path d="M43 121L41.5 509" stroke="#0c0c0c" stroke-width="2"/></g></svg>
<div class="a" style="left:10px;top:356px;width:53px;height:14px;border:1px solid #f07070;border-right:none"></div>
<div class="a" style="left:853px;top:390px;width:29px;height:1px;background:#f07070"></div>
<div class="a" style="left:853px;top:404px;width:29px;height:1px;background:#f07070"></div>
<div class="a" style="left:63px;top:121px;width:790px;height:379px;background:linear-gradient(#99b6d6,#bad2ec 22px,#b9d1ea 23px,#b9d1ea);border-left:1px solid #fff;border-right:1px solid #3fd0f0;border-bottom:1px solid #3fd0f0"></div>
<svg class="i" style="left:72px;top:124px" width="16" height="16" viewBox="0 0 16 16" shape-rendering="crispEdges"><path d="M3 0h11v4H1V2z" fill="#c8c8c8"/><path d="M3 0.5h11M0.5 2v14M15.5 0v16M0 12.5h16" stroke="#000"/><rect x="5" y="2" width="2" height="2" fill="#a020a0"/><rect x="6" y="2" width="2" height="2" fill="#2040e0"/><rect x="8" y="2" width="2" height="2" fill="#20c020"/><rect x="9" y="2" width="1" height="2" fill="#f0e000"/><rect x="10" y="2" width="2" height="2" fill="#e02020"/><rect x="1" y="5" width="14" height="7" fill="#fff"/><rect x="1" y="6" width="2" height="1" fill="#0030ff"/><rect x="7" y="6" width="7" height="1" fill="#0030ff"/><rect x="4" y="8" width="2" height="1" fill="#0030ff"/><rect x="1" y="13" width="14" height="3" fill="#c8c8c8"/></svg>
<div class="a" style="left:92px;top:126px;font-size:12px;line-height:14px;letter-spacing:-0.4px;color:#000">NovaCas2021_lamp_1.spc</div>
<div class="a tb" style="left:744px;top:123px;width:32px;height:18px"><i class="m"></i></div>
<div class="a tb" style="left:778px;top:123px;width:32px;height:18px"><i class="x"></i></div>
<div class="a tb cl" style="left:812px;top:123px;width:32px;height:18px"><svg width="30" height="16" style="position:absolute;left:0;top:0"><path d="M10.5 5.3l8 5.4M18.5 5.3l-8 5.4" stroke="#333" stroke-width="3.8" stroke-linecap="round"/><path d="M10.5 5.3l8 5.4M18.5 5.3l-8 5.4" stroke="#fff" stroke-width="2.2" stroke-linecap="round"/></svg></div>
<div class="a" style="left:70px;top:144px;width:752px;height:349px;background:#c8c400"></div>
<div class="a" style="left:73px;top:147px;width:745px;height:343px;background:#fff;border:1px solid #6b6b6b"></div>
<div class="a" style="left:822px;top:144px;width:24px;height:349px;background:#f0f0f0;border-left:1px solid #fff;border-top:1px solid #fff;border-right:1px solid #a0a0a0;border-bottom:1px solid #a0a0a0"></div>
<svg class="a" style="left:74px;top:148px" width="743" height="341" viewBox="74 148 743 341"><line x1="589.5" y1="148" x2="589.5" y2="489" stroke="#c00000"/><polyline fill="none" stroke="#0000ff" stroke-width="1" shape-rendering="crispEdges" points="74,474.3 79,474.3 80,475.3 95,475.3 96,474.3 138,474.3 153,473.1 160,471 168.4,466.8 172,449 178,409.6 185,352.1 193.1,361.8 196.2,386 202.3,449 211.4,469.6 227.9,460.8 235.9,462 245.6,472.1 258,475.2 272.7,475.2 277.2,473.6 293,473.1 302,475.2 361,475.2 378,475.2 402,475.2 420,473.1 424.6,472.2 445,472.7 450,474.3 463,475.2 480,475.2 481,474.3 497,474.3 498,473.2 506,473.2 507,475.2 557,475.2 575,474.3 600,475.2 610,475.2 612,474.5 657,473 680,470.4 699,459 706.6,426.6 712.3,331.4 716.1,217.1 723.8,180 729.5,228.5 735.2,350.4 741.7,457 750.4,464.6 767.6,449.4 775.2,453.2 784.7,466.5 798,473 817,475"/><polyline fill="none" stroke="#ff00ff" stroke-width="1" shape-rendering="crispEdges" points="74,474.3 138,474.3 139,473.1 153,473.1 168.9,469 177,449.9 185.8,369 193.4,354.5 202.3,391.7 211.7,466 219,469.2 228.7,459.9 236.7,460.4 244.8,464.4 253.7,473.3 258,474.3 275,473.6 284,472.2 292,472.2 298.8,473.1 310,473.6 327,474.5 345,475.4 358.8,474.5 370,475.4 420,474 431.4,472.2 445,472.2 450,474.3 463,474.3 464,475.2 480,475.2 481,474.3 497,474.3 498,472.5 506,472.5 507,474.3 610,474.3 611,475.2 617,475.2 618,474.3 672.4,471.5 700,460 706.6,449.4 714.2,388.5 722.6,236.2 724.9,180 732.5,198 739,350.4 746.6,438 756.1,464.6 775.2,449.4 794.2,470.4 817,474.3"/></svg>
<svg class="i" style="left:826px;top:148px" width="15" height="17" viewBox="0 0 15 17" shape-rendering="crispEdges"><rect x="0" y="0" width="15" height="17" fill="#ebe8d8"/><path d="M8 1L14 16Q9 11 1 15z" fill="#c8b820" shape-rendering="auto"/><path d="M8 1L14 16Q10 12 7 12z" fill="#3a3a10" shape-rendering="auto"/></svg>
<svg class="i" style="left:826px;top:171px" width="15" height="17" viewBox="0 0 15 17" shape-rendering="crispEdges"><rect x="0" y="0" width="15" height="17" fill="#ebe8d8"/><path d="M8 16L14 1Q9 6 1 2z" fill="#c8b820" shape-rendering="auto"/><path d="M8 16L1 2Q6 5 9 5z" fill="#3a3a10" shape-rendering="auto"/></svg>
<svg class="i" style="left:826px;top:194px" width="15" height="17" viewBox="0 0 15 17" shape-rendering="crispEdges"><rect x="0" y="0" width="15" height="17" fill="#ebe8d8"/><path d="M3.5 8V6Q3.5 2 8 2T12 5.5" fill="none" stroke="#000" stroke-width="1.8" shape-rendering="auto"/><rect x="1.5" y="7.5" width="12" height="9" rx="1.5" fill="#ffff80" stroke="#000" stroke-width="1.4" shape-rendering="auto"/><path d="M7.5 10l1.6 1.6-1.6 1.6-1.6-1.6z" fill="#000" shape-rendering="auto"/></svg>
<div class="a" style="left:824px;top:217px;width:19px;height:1px;background:#a0a0a0"></div>
<svg class="i" style="left:826px;top:225px" width="15" height="17" viewBox="0 0 15 17" shape-rendering="crispEdges"><rect x="0" y="0" width="15" height="17" fill="#ebe8d8"/><rect x="2" y="5" width="11" height="3" fill="#000"/><rect x="2" y="10" width="11" height="3" fill="#000"/><rect x="3" y="8" width="10" height="1" fill="#ffff40"/><rect x="3" y="13" width="10" height="1" fill="#ffff40"/></svg>
<svg class="i" style="left:826px;top:248px" width="16" height="17" viewBox="0 0 16 17" shape-rendering="crispEdges"><rect x="3" y="0" width="12" height="13" fill="#e6e6e6"/><rect x="1" y="1" width="1" height="16" fill="#10105a"/><rect x="2" y="2" width="1" height="1" fill="#10105a"/><rect x="0" y="14" width="15" height="1" fill="#0010c0"/><rect x="14" y="13" width="1" height="1" fill="#0010c0"/><rect x="3" y="10" width="1" height="1" fill="#a000b0"/><rect x="4" y="9" width="1" height="1" fill="#a000b0"/><rect x="5" y="10" width="2" height="1" fill="#a000b0"/><rect x="7" y="9" width="1" height="1" fill="#a000b0"/><rect x="8" y="5" width="1" height="4" fill="#a000b0"/><rect x="9" y="8" width="1" height="2" fill="#a000b0"/><rect x="10" y="10" width="2" height="1" fill="#a000b0"/><rect x="12" y="11" width="1" height="1" fill="#a000b0"/><rect x="13" y="10" width="1" height="1" fill="#a000b0"/><rect x="11" y="0" width="4" height="2" fill="#d00030"/><rect x="10" y="1" width="2" height="3" fill="#d00030"/><rect x="11" y="3" width="4" height="2" fill="#d00030"/><rect x="12" y="2" width="1" height="1" fill="#fff"/></svg>
<svg class="i" style="left:826px;top:272px" width="15" height="15" viewBox="0 0 15 15" shape-rendering="crispEdges"><rect x="0" y="0" width="15" height="15" fill="#000"/><rect x="2" y="2" width="11" height="11" fill="#ffff80"/><rect x="3" y="1" width="1" height="1" fill="#ffff80"/><rect x="5" y="1" width="1" height="1" fill="#ffff80"/><rect x="7" y="1" width="1" height="1" fill="#ffff80"/><rect x="9" y="1" width="1" height="1" fill="#ffff80"/><rect x="11" y="1" width="1" height="1" fill="#ffff80"/><rect x="3" y="13" width="1" height="1" fill="#ffff80"/><rect x="5" y="13" width="1" height="1" fill="#ffff80"/><rect x="7" y="13" width="1" height="1" fill="#ffff80"/><rect x="9" y="13" width="1" height="1" fill="#ffff80"/><rect x="11" y="13" width="1" height="1" fill="#ffff80"/><rect x="1" y="3" width="1" height="1" fill="#ffff80"/><rect x="1" y="5" width="1" height="1" fill="#ffff80"/><rect x="1" y="7" width="1" height="1" fill="#ffff80"/><rect x="1" y="9" width="1" height="1" fill="#ffff80"/><rect x="1" y="11" width="1" height="1" fill="#ffff80"/><rect x="13" y="3" width="1" height="1" fill="#ffff80"/><rect x="13" y="5" width="1" height="1" fill="#ffff80"/><rect x="13" y="7" width="1" height="1" fill="#ffff80"/><rect x="13" y="9" width="1" height="1" fill="#ffff80"/><rect x="13" y="11" width="1" height="1" fill="#ffff80"/></svg>
<svg class="i" style="left:826px;top:294px" width="15" height="17" viewBox="0 0 15 17" shape-rendering="crispEdges"><rect x="0" y="0" width="15" height="17" fill="#ebe8d8"/><rect x="0" y="2" width="15" height="13" fill="#fff"/><rect x="0" y="2" width="15" height="2" fill="#5a88c8"/><rect x="0" y="14" width="15" height="1" fill="#888"/><path d="M4 10l5-5" stroke="#000" shape-rendering="auto"/><path d="M8 2l5-2 2 3-4 3z" fill="#a00010" shape-rendering="auto"/></svg>
<svg class="i" style="left:826px;top:317px" width="15" height="17" viewBox="0 0 15 17" shape-rendering="crispEdges"><rect x="0" y="0" width="15" height="17" fill="#ebe8d8"/><rect x="0" y="4" width="15" height="11" rx="2" fill="#a8a8d8" shape-rendering="auto"/><circle cx="8" cy="9.5" r="4" fill="#fff" stroke="#4080e0" stroke-width="1.5" shape-rendering="auto"/><circle cx="12" cy="5" r="2" fill="#c0e0ff" shape-rendering="auto"/></svg>
<svg class="i" style="left:826px;top:339px" width="15" height="18" viewBox="0 0 15 18" shape-rendering="crispEdges"><rect x="0" y="0" width="15" height="18" fill="#ebe8d8"/><path d="M0 9Q0 1 7.5 1T15 9v8H0z" fill="#f04020" shape-rendering="auto"/><rect x="0" y="6" width="15" height="2" fill="#ffa000"/><rect x="0" y="8" width="15" height="2" fill="#e0e000"/><rect x="0" y="10" width="15" height="2" fill="#20c040"/><rect x="0" y="12" width="15" height="2" fill="#20a0c0"/><rect x="0" y="14" width="15" height="2" fill="#3030e0"/><rect x="0" y="16" width="15" height="2" fill="#e040e0"/></svg>
<div class="a" style="left:824px;top:363px;width:19px;height:1px;background:#a0a0a0"></div>
<svg class="i" style="left:826px;top:371px" width="15" height="16" viewBox="0 0 15 16" shape-rendering="crispEdges"><rect x="0" y="0" width="15" height="16" fill="#ebe8d8"/><rect x="1" y="1" width="13" height="14" fill="#fff"/><defs><linearGradient id="gg" x1="0" y1="0" x2="1" y2="1"><stop offset="0.45" stop-color="#fff"/><stop offset="1" stop-color="#202020"/></linearGradient></defs><path d="M1 15L14 2v13z" fill="url(#gg)"/><rect x="2" y="12" width="1" height="1" fill="#555"/><rect x="2" y="14" width="1" height="1" fill="#555"/><rect x="3" y="11" width="1" height="1" fill="#555"/><rect x="3" y="13" width="1" height="1" fill="#555"/><rect x="4" y="10" width="1" height="1" fill="#555"/><rect x="4" y="12" width="1" height="1" fill="#555"/><rect x="4" y="14" width="1" height="1" fill="#555"/><rect x="5" y="9" width="1" height="1" fill="#555"/><rect x="5" y="11" width="1" height="1" fill="#555"/><rect x="5" y="13" width="1" height="1" fill="#555"/><rect x="6" y="8" width="1" height="1" fill="#555"/><rect x="6" y="10" width="1" height="1" fill="#555"/><rect x="6" y="12" width="1" height="1" fill="#555"/><rect x="7" y="7" width="1" height="1" fill="#555"/><rect x="7" y="9" width="1" height="1" fill="#555"/><rect x="7" y="11" width="1" height="1" fill="#555"/><rect x="8" y="6" width="1" height="1" fill="#555"/><rect x="8" y="8" width="1" height="1" fill="#555"/><rect x="8" y="10" width="1" height="1" fill="#555"/><rect x="9" y="5" width="1" height="1" fill="#555"/><rect x="9" y="7" width="1" height="1" fill="#555"/><rect x="9" y="9" width="1" height="1" fill="#555"/><rect x="10" y="4" width="1" height="1" fill="#555"/><rect x="10" y="6" width="1" height="1" fill="#555"/><rect x="10" y="8" width="1" height="1" fill="#555"/><rect x="11" y="3" width="1" height="1" fill="#555"/><rect x="11" y="5" width="1" height="1" fill="#555"/><rect x="11" y="7" width="1" height="1" fill="#555"/><rect x="12" y="4" width="1" height="1" fill="#555"/><rect x="12" y="6" width="1" height="1" fill="#555"/><rect x="13" y="3" width="1" height="1" fill="#555"/><rect x="13" y="5" width="1" height="1" fill="#555"/><rect x="1" y="14" width="13" height="1" fill="#000"/><rect x="13" y="2" width="1" height="13" fill="#000"/></svg>
<svg class="i" style="left:826px;top:394px" width="15" height="17" viewBox="0 0 15 17" shape-rendering="crispEdges"><rect x="0" y="0" width="15" height="17" fill="#ebebeb"/><path d="M2 3l11 11" stroke="#000" stroke-width="2" shape-rendering="auto"/></svg>
<svg class="i" style="left:826px;top:417px" width="15" height="17" viewBox="0 0 15 17" shape-rendering="crispEdges"><rect x="0" y="0" width="15" height="17" fill="#ebebeb"/><text x="7.5" y="13" font-family="Liberation Sans" font-weight="bold" font-size="13" text-anchor="middle" fill="#000">A</text></svg>
<div class="a" style="left:24px;top:538px;width:843px;height:305px;background:#d6e3f1;border-left:1px solid #888;border-right:1px solid #555;border-bottom:1px solid #555"></div>
<div class="a" style="left:32px;top:538px;width:803px;height:297px;background:#c8c400"></div>
<div class="a" style="left:35px;top:538px;width:796px;height:294px;background:#fff;border:1px solid #6b6b6b;border-top:none"></div>
<div class="a" style="left:835px;top:538px;width:24px;height:297px;background:#f0f0f0;border-left:1px solid #fff;border-right:1px solid #a0a0a0;border-bottom:1px solid #a0a0a0"></div>
<svg class="a" style="left:36px;top:538px" width="794" height="293" viewBox="36 538 794 293"><line x1="520.5" y1="538" x2="520.5" y2="831" stroke="#c00000"/><polyline fill="none" stroke="#0000ff" stroke-width="1" shape-rendering="crispEdges" points="36,809.4 60,807.4 76.1,805.9 102.3,807.9 112.3,809.4 129.8,810.7 147.2,813.7 164.7,819.9 182.2,823.6 195.9,823.6 209.6,816.1 224.6,807.9 239.5,804.2 250,802.4 272.4,799.6 292.4,790.9 302.4,789.2 319.8,780.9 334.8,771.7 344.8,763.5 357.2,756 369.7,744.8 384.7,727.3 395,709.3 409.6,679.9 415.8,664.6 426.2,633.5 436.5,594 442.8,565 453.5,545.2 462.7,563.1 465,568.9 473.1,600 480.5,630 485,648 492.5,681 500,697.6 509,715.6 520.3,732.1 533,749.4 540.6,753.1 548.8,760 554.9,765.3 573,774.4 594.8,783.5 611.2,787.1 631.1,794.3 649.3,796.2 671,799.8 703.7,803.4 732.7,801.6 761.7,803.4 798,801.6 812.5,805.2 830,804.5"/><polyline fill="none" stroke="#ff00ff" stroke-width="1" shape-rendering="crispEdges" points="36,809.4 60,807 77.4,806.4 99.8,807.4 119.8,807.9 129.8,809.9 147.2,813.7 164.7,819.4 182.2,823.6 195.9,824.1 204.6,821.9 219.6,812.9 232,807 250,803.2 274.9,799.1 302.4,788.4 332.3,773.5 352.2,762.7 367.2,749.8 385.9,731 397,712.4 415.8,677 426.2,648 436.5,610.6 443.8,573.2 449,558.7 453.5,544.6 458.7,544.4 463.9,545.2 472.5,568.9 474.2,574.6 486.5,630 492.5,657 501.5,687 513.5,711 521,727.6 534.6,741.1 549.6,754.6 569.4,768.9 598.5,783.5 634.7,792.5 674.6,799.8 714.6,802.3 750.8,801.6 798,801.6 812.5,804.1 830,804.1"/></svg>
<svg class="i" style="left:839px;top:515px" width="15" height="17" viewBox="0 0 15 17" shape-rendering="crispEdges"><rect x="0" y="0" width="15" height="17" fill="#ebe8d8"/><path d="M8 1L14 16Q9 11 1 15z" fill="#c8b820" shape-rendering="auto"/><path d="M8 1L14 16Q10 12 7 12z" fill="#3a3a10" shape-rendering="auto"/></svg>
<svg class="i" style="left:839px;top:538px" width="15" height="17" viewBox="0 0 15 17" shape-rendering="crispEdges"><rect x="0" y="0" width="15" height="17" fill="#ebe8d8"/><path d="M8 16L14 1Q9 6 1 2z" fill="#c8b820" shape-rendering="auto"/><path d="M8 16L1 2Q6 5 9 5z" fill="#3a3a10" shape-rendering="auto"/></svg>
<svg class="i" style="left:839px;top:561px" width="15" height="17" viewBox="0 0 15 17" shape-rendering="crispEdges"><rect x="0" y="0" width="15" height="17" fill="#ebe8d8"/><path d="M3.5 8V6Q3.5 2 8 2T12 5.5" fill="none" stroke="#000" stroke-width="1.8" shape-rendering="auto"/><rect x="1.5" y="7.5" width="12" height="9" rx="1.5" fill="#ffff80" stroke="#000" stroke-width="1.4" shape-rendering="auto"/><path d="M7.5 10l1.6 1.6-1.6 1.6-1.6-1.6z" fill="#000" shape-rendering="auto"/></svg>
<div class="a" style="left:837px;top:584px;width:19px;height:1px;background:#a0a0a0"></div>
<svg class="i" style="left:839px;top:592px" width="15" height="17" viewBox="0 0 15 17" shape-rendering="crispEdges"><rect x="0" y="0" width="15" height="17" fill="#ebe8d8"/><rect x="2" y="5" width="11" height="3" fill="#000"/><rect x="2" y="10" width="11" height="3" fill="#000"/><rect x="3" y="8" width="10" height="1" fill="#ffff40"/><rect x="3" y="13" width="10" height="1" fill="#ffff40"/></svg>
<svg class="i" style="left:839px;top:615px" width="16" height="17" viewBox="0 0 16 17" shape-rendering="crispEdges"><rect x="3" y="0" width="12" height="13" fill="#e6e6e6"/><rect x="1" y="1" width="1" height="16" fill="#10105a"/><rect x="2" y="2" width="1" height="1" fill="#10105a"/><rect x="0" y="14" width="15" height="1" fill="#0010c0"/><rect x="14" y="13" width="1" height="1" fill="#0010c0"/><rect x="3" y="10" width="1" height="1" fill="#a000b0"/><rect x="4" y="9" width="1" height="1" fill="#a000b0"/><rect x="5" y="10" width="2" height="1" fill="#a000b0"/><rect x="7" y="9" width="1" height="1" fill="#a000b0"/><rect x="8" y="5" width="1" height="4" fill="#a000b0"/><rect x="9" y="8" width="1" height="2" fill="#a000b0"/><rect x="10" y="10" width="2" height="1" fill="#a000b0"/><rect x="12" y="11" width="1" height="1" fill="#a000b0"/><rect x="13" y="10" width="1" height="1" fill="#a000b0"/><rect x="11" y="0" width="4" height="2" fill="#d00030"/><rect x="10" y="1" width="2" height="3" fill="#d00030"/><rect x="11" y="3" width="4" height="2" fill="#d00030"/><rect x="12" y="2" width="1" height="1" fill="#fff"/></svg>
<svg class="i" style="left:839px;top:639px" width="15" height="15" viewBox="0 0 15 15" shape-rendering="crispEdges"><rect x="0" y="0" width="15" height="15" fill="#000"/><rect x="2" y="2" width="11" height="11" fill="#ffff80"/><rect x="3" y="1" width="1" height="1" fill="#ffff80"/><rect x="5" y="1" width="1" height="1" fill="#ffff80"/><rect x="7" y="1" width="1" height="1" fill="#ffff80"/><rect x="9" y="1" width="1" height="1" fill="#ffff80"/><rect x="11" y="1" width="1" height="1" fill="#ffff80"/><rect x="3" y="13" width="1" height="1" fill="#ffff80"/><rect x="5" y="13" width="1" height="1" fill="#ffff80"/><rect x="7" y="13" width="1" height="1" fill="#ffff80"/><rect x="9" y="13" width="1" height="1" fill="#ffff80"/><rect x="11" y="13" width="1" height="1" fill="#ffff80"/><rect x="1" y="3" width="1" height="1" fill="#ffff80"/><rect x="1" y="5" width="1" height="1" fill="#ffff80"/><rect x="1" y="7" width="1" height="1" fill="#ffff80"/><rect x="1" y="9" width="1" height="1" fill="#ffff80"/><rect x="1" y="11" width="1" height="1" fill="#ffff80"/><rect x="13" y="3" width="1" height="1" fill="#ffff80"/><rect x="13" y="5" width="1" height="1" fill="#ffff80"/><rect x="13" y="7" width="1" height="1" fill="#ffff80"/><rect x="13" y="9" width="1" height="1" fill="#ffff80"/><rect x="13" y="11" width="1" height="1" fill="#ffff80"/></svg>
<svg class="i" style="left:839px;top:661px" width="15" height="17" viewBox="0 0 15 17" shape-rendering="crispEdges"><rect x="0" y="0" width="15" height="17" fill="#ebe8d8"/><rect x="0" y="2" width="15" height="13" fill="#fff"/><rect x="0" y="2" width="15" height="2" fill="#5a88c8"/><rect x="0" y="14" width="15" height="1" fill="#888"/><path d="M4 10l5-5" stroke="#000" shape-rendering="auto"/><path d="M8 2l5-2 2 3-4 3z" fill="#a00010" shape-rendering="auto"/></svg>
<svg class="i" style="left:839px;top:684px" width="15" height="17" viewBox="0 0 15 17" shape-rendering="crispEdges"><rect x="0" y="0" width="15" height="17" fill="#ebe8d8"/><rect x="0" y="4" width="15" height="11" rx="2" fill="#a8a8d8" shape-rendering="auto"/><circle cx="8" cy="9.5" r="4" fill="#fff" stroke="#4080e0" stroke-width="1.5" shape-rendering="auto"/><circle cx="12" cy="5" r="2" fill="#c0e0ff" shape-rendering="auto"/></svg>
<svg class="i" style="left:839px;top:706px" width="15" height="18" viewBox="0 0 15 18" shape-rendering="crispEdges"><rect x="0" y="0" width="15" height="18" fill="#ebe8d8"/><path d="M0 9Q0 1 7.5 1T15 9v8H0z" fill="#f04020" shape-rendering="auto"/><rect x="0" y="6" width="15" height="2" fill="#ffa000"/><rect x="0" y="8" width="15" height="2" fill="#e0e000"/><rect x="0" y="10" width="15" height="2" fill="#20c040"/><rect x="0" y="12" width="15" height="2" fill="#20a0c0"/><rect x="0" y="14" width="15" height="2" fill="#3030e0"/><rect x="0" y="16" width="15" height="2" fill="#e040e0"/></svg>
<div class="a" style="left:837px;top:730px;width:19px;height:1px;background:#a0a0a0"></div>
<svg class="i" style="left:839px;top:738px" width="15" height="16" viewBox="0 0 15 16" shape-rendering="crispEdges"><rect x="0" y="0" width="15" height="16" fill="#ebe8d8"/><rect x="1" y="1" width="13" height="14" fill="#fff"/><defs><linearGradient id="gg" x1="0" y1="0" x2="1" y2="1"><stop offset="0.45" stop-color="#fff"/><stop offset="1" stop-color="#202020"/></linearGradient></defs><path d="M1 15L14 2v13z" fill="url(#gg)"/><rect x="2" y="12" width="1" height="1" fill="#555"/><rect x="2" y="14" width="1" height="1" fill="#555"/><rect x="3" y="11" width="1" height="1" fill="#555"/><rect x="3" y="13" width="1" height="1" fill="#555"/><rect x="4" y="10" width="1" height="1" fill="#555"/><rect x="4" y="12" width="1" height="1" fill="#555"/><rect x="4" y="14" width="1" height="1" fill="#555"/><rect x="5" y="9" width="1" height="1" fill="#555"/><rect x="5" y="11" width="1" height="1" fill="#555"/><rect x="5" y="13" width="1" height="1" fill="#555"/><rect x="6" y="8" width="1" height="1" fill="#555"/><rect x="6" y="10" width="1" height="1" fill="#555"/><rect x="6" y="12" width="1" height="1" fill="#555"/><rect x="7" y="7" width="1" height="1" fill="#555"/><rect x="7" y="9" width="1" height="1" fill="#555"/><rect x="7" y="11" width="1" height="1" fill="#555"/><rect x="8" y="6" width="1" height="1" fill="#555"/><rect x="8" y="8" width="1" height="1" fill="#555"/><rect x="8" y="10" width="1" height="1" fill="#555"/><rect x="9" y="5" width="1" height="1" fill="#555"/><rect x="9" y="7" width="1" height="1" fill="#555"/><rect x="9" y="9" width="1" height="1" fill="#555"/><rect x="10" y="4" width="1" height="1" fill="#555"/><rect x="10" y="6" width="1" height="1" fill="#555"/><rect x="10" y="8" width="1" height="1" fill="#555"/><rect x="11" y="3" width="1" height="1" fill="#555"/><rect x="11" y="5" width="1" height="1" fill="#555"/><rect x="11" y="7" width="1" height="1" fill="#555"/><rect x="12" y="4" width="1" height="1" fill="#555"/><rect x="12" y="6" width="1" height="1" fill="#555"/><rect x="13" y="3" width="1" height="1" fill="#555"/><rect x="13" y="5" width="1" height="1" fill="#555"/><rect x="1" y="14" width="13" height="1" fill="#000"/><rect x="13" y="2" width="1" height="13" fill="#000"/></svg>
<svg class="i" style="left:839px;top:761px" width="15" height="17" viewBox="0 0 15 17" shape-rendering="crispEdges"><rect x="0" y="0" width="15" height="17" fill="#ebebeb"/><path d="M2 3l11 11" stroke="#000" stroke-width="2" shape-rendering="auto"/></svg>
<svg class="i" style="left:839px;top:784px" width="15" height="17" viewBox="0 0 15 17" shape-rendering="crispEdges"><rect x="0" y="0" width="15" height="17" fill="#ebebeb"/><text x="7.5" y="13" font-family="Liberation Sans" font-weight="bold" font-size="13" text-anchor="middle" fill="#000">A</text></svg>
<div class="a" style="left:0;top:737px;width:23px;height:4px;background:linear-gradient(#000,#161616,#000)"></div>
<div class="a" style="left:867px;top:538px;width:15px;height:305px;background:#fff"></div>
<div class="a" style="left:867px;top:839px;width:15px;height:3px;background:#c8c400"></div>
<svg class="a" style="left:867px;top:822px" width="15" height="10"><polyline fill="none" stroke="#0000ff" points="0,4 2,6 5,5 8,5 10,3 12,4 15,4"/></svg>
<div class="a" style="left:5px;top:509px;width:877px;height:29px;background:#f0f0f0;border-top:1px solid #fff"></div>
<div class="a" style="left:5px;top:518px;width:877px;height:1px;background:#7c7c7c"></div>
<div class="a" style="left:7px;top:520px;width:440px;height:17px;border-top:2px solid #8a8a8a;border-left:2px solid #8a8a8a;border-bottom:2px solid #fff;border-right:1px solid #fff"></div>
<div class="a" style="left:5px;top:537px;width:877px;height:1px;background:#6a6a6a"></div>
<div class="a" style="left:24px;top:538px;width:858px;height:22px;background:linear-gradient(rgba(0,0,0,0.22),rgba(0,0,0,0.06) 45%,rgba(0,0,0,0))"></div>
<div class="a" style="left:0;top:843px;width:882px;height:23px;background:#f0f0f0"></div>
<div class="a" style="left:0;top:852px;width:882px;height:1px;background:#6a6a6a"></div>
<div class="a" style="left:0;top:854px;width:882px;height:2px;background:#a0a0a0"></div>
<div class="a" style="left:0;top:857px;width:434px;height:3px;overflow:hidden"><div style="position:absolute;left:0;top:-2px;font-size:12px;line-height:14px;color:#000;white-space:nowrap">C:\Users\spectro\Desktop\NovaCas2021_1</div></div>
<div class="a" style="left:0;top:860px;width:21px;height:6px;background:#2b2b28"></div>
<div class="a" style="left:365px;top:860px;width:517px;height:6px;background:#3a3632"></div>
</body></html>
